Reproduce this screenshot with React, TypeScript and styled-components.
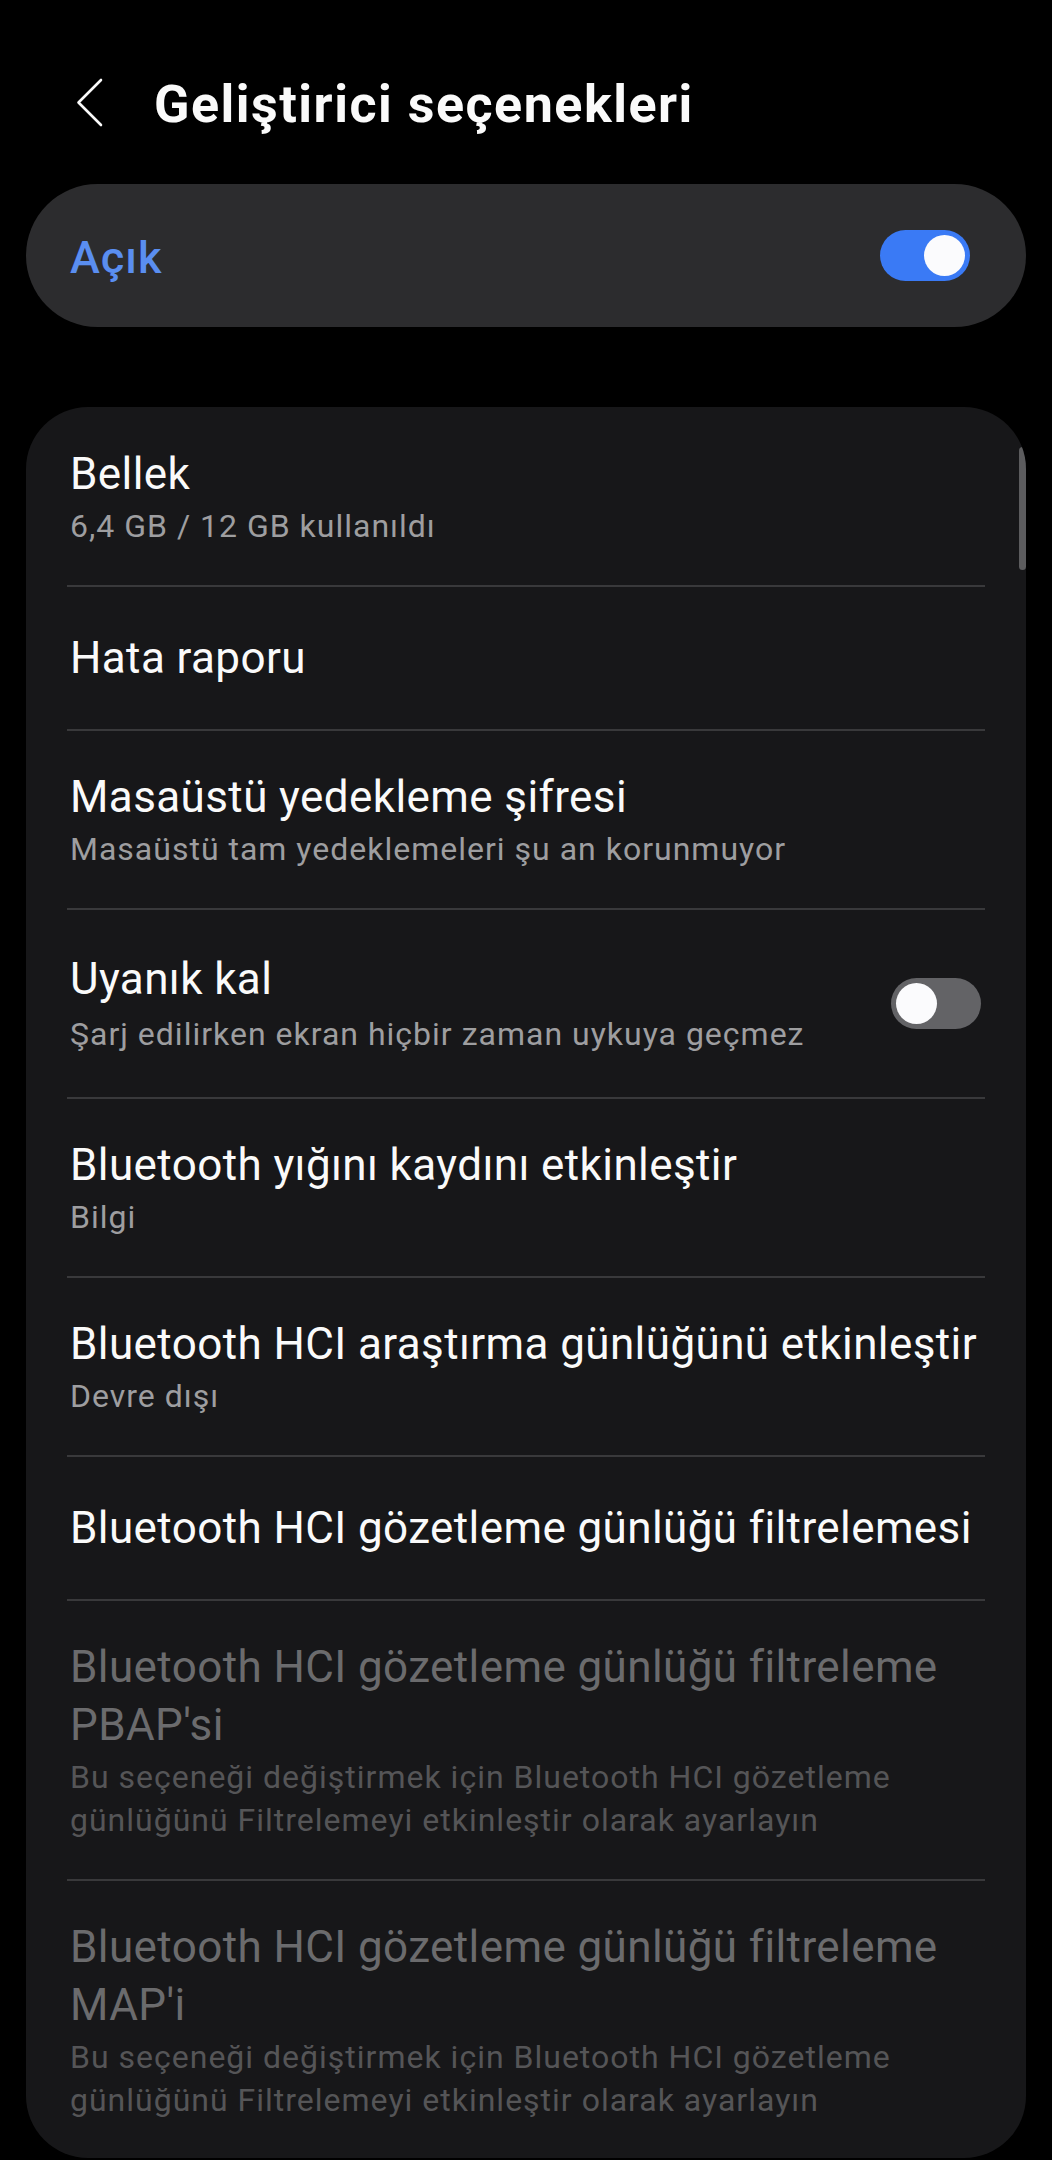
import React from "react";
import styled, { createGlobalStyle } from "styled-components";

const GlobalStyle = createGlobalStyle`
  *, *::before, *::after { box-sizing: border-box; }
  html, body { margin: 0; padding: 0; background: #000; }
  body {
    font-family: Roboto, "Noto Sans", "Liberation Sans", sans-serif;
    color: #fafafa;
    -webkit-font-smoothing: antialiased;
  }
`;

const Page = styled.div`
  width: 1052px;
  min-height: 2160px;
  background: #000;
  display: flex;
  flex-direction: column;
`;

const Header = styled.header`
  display: flex;
  align-items: flex-start;
  gap: 50px;
  margin-top: 73px;
  padding-left: 76px;
  height: 111px;
`;

const BackButton = styled.button`
  display: flex;
  padding: 0;
  margin-top: 5px;
  border: none;
  background: transparent;
  cursor: pointer;
`;

const Title = styled.h1`
  margin: 0;
  font-size: 52px;
  line-height: 64px;
  font-weight: 700;
  color: #fafafa;
  letter-spacing: 1.5px;
`;

const MasterPill = styled.div`
  margin: 0 26px;
  height: 143px;
  border-radius: 72px;
  background: #2c2c2e;
  display: flex;
  align-items: center;
  justify-content: space-between;
  padding: 0 56px 0 44px;
`;

const MasterLabel = styled.span`
  font-size: 45px;
  line-height: 54px;
  font-weight: 500;
  letter-spacing: 1px;
  color: #5a8ef0;
  padding-top: 4px;
`;

const Track = styled.span<{ $on: boolean }>`
  display: flex;
  align-items: center;
  justify-content: ${(p) => (p.$on ? "flex-end" : "flex-start")};
  flex: none;
  width: 90px;
  height: 51px;
  border-radius: 26px;
  padding: 0 5px;
  background: ${(p) => (p.$on ? "#3a7af5" : "#636366")};
`;

const Knob = styled.span`
  width: 41px;
  height: 41px;
  border-radius: 50%;
  background: #fbfbfd;
`;

const Card = styled.section`
  position: relative;
  margin: 80px 26px 0;
  border-radius: 62px;
  background: #171719;
  overflow: hidden;
`;

const ScrollThumb = styled.span`
  position: absolute;
  top: 40px;
  right: 0;
  width: 7px;
  height: 123px;
  border-radius: 4px;
  background: #5c5c5e;
`;

const RowWrap = styled.div<{ $last?: boolean; $first?: boolean; $switch?: boolean }>`
  margin: 0 41px;
  display: flex;
  align-items: center;
  gap: 24px;
  min-height: ${(p) => (p.$last ? "0" : "144px")};
  padding: ${(p) =>
    p.$switch
      ? "40px 4px 41px 3px"
      : `${p.$first ? 38 : 37}px 4px ${p.$last ? 36 : 37}px 3px`};
  border-bottom: ${(p) => (p.$last ? "none" : "2px solid #39393b")};
`;

const TextCol = styled.div<{ $gap: number }>`
  flex: 1;
  min-width: 0;
  display: flex;
  flex-direction: column;
  gap: ${(p) => p.$gap}px;
`;

const RowTitle = styled.div<{ $disabled?: boolean }>`
  font-size: 44px;
  line-height: 58px;
  font-weight: 400;
  letter-spacing: 0.4px;
  color: ${(p) => (p.$disabled ? "#6b6b6d" : "#fafafa")};
`;

const RowSub = styled.div<{ $disabled?: boolean }>`
  font-size: 32px;
  line-height: 43px;
  font-weight: 400;
  letter-spacing: 1px;
  color: ${(p) => (p.$disabled ? "#555557" : "#9e9ea0")};
`;

type Item = {
  title: string;
  sub?: string;
  disabled?: boolean;
  toggle?: boolean;
};

const items: Item[] = [
  { title: "Bellek", sub: "6,4 GB / 12 GB kullanıldı" },
  { title: "Hata raporu" },
  { title: "Masaüstü yedekleme şifresi", sub: "Masaüstü tam yedeklemeleri şu an korunmuyor" },
  { title: "Uyanık kal", sub: "Şarj edilirken ekran hiçbir zaman uykuya geçmez", toggle: true },
  { title: "Bluetooth yığını kaydını etkinleştir", sub: "Bilgi" },
  { title: "Bluetooth HCI araştırma günlüğünü etkinleştir", sub: "Devre dışı" },
  { title: "Bluetooth HCI gözetleme günlüğü filtrelemesi" },
  {
    title: "Bluetooth HCI gözetleme günlüğü filtreleme PBAP'si",
    sub: "Bu seçeneği değiştirmek için Bluetooth HCI gözetleme günlüğünü Filtrelemeyi etkinleştir olarak ayarlayın",
    disabled: true,
  },
  {
    title: "Bluetooth HCI gözetleme günlüğü filtreleme MAP'i",
    sub: "Bu seçeneği değiştirmek için Bluetooth HCI gözetleme günlüğünü Filtrelemeyi etkinleştir olarak ayarlayın",
    disabled: true,
  },
];

const Switch = ({ on }: { on: boolean }) => (
  <Track $on={on} role="switch" aria-checked={on}>
    <Knob />
  </Track>
);

const BackIcon = () => (
  <svg width="28" height="50" viewBox="0 0 28 50" fill="none">
    <path d="M25 2 L2.5 24.5 L25 47" stroke="#fafafa" strokeWidth="2.6" strokeLinecap="round" strokeLinejoin="round" />
  </svg>
);

export default function App() {
  return (
    <>
      <GlobalStyle />
      <Page>
        <Header>
          <BackButton aria-label="Geri">
            <BackIcon />
          </BackButton>
          <Title>Geliştirici seçenekleri</Title>
        </Header>
        <MasterPill>
          <MasterLabel>Açık</MasterLabel>
          <Switch on={true} />
        </MasterPill>
        <Card>
          <ScrollThumb />
          {items.map((it, i) => (
            <RowWrap
              key={it.title}
              $first={i === 0}
              $last={i === items.length - 1}
              $switch={it.toggle}
            >
              <TextCol $gap={it.toggle ? 5 : 2}>
                <RowTitle $disabled={it.disabled}>{it.title}</RowTitle>
                {it.sub && <RowSub $disabled={it.disabled}>{it.sub}</RowSub>}
              </TextCol>
              {it.toggle && <Switch on={false} />}
            </RowWrap>
          ))}
        </Card>
      </Page>
    </>
  );
}
